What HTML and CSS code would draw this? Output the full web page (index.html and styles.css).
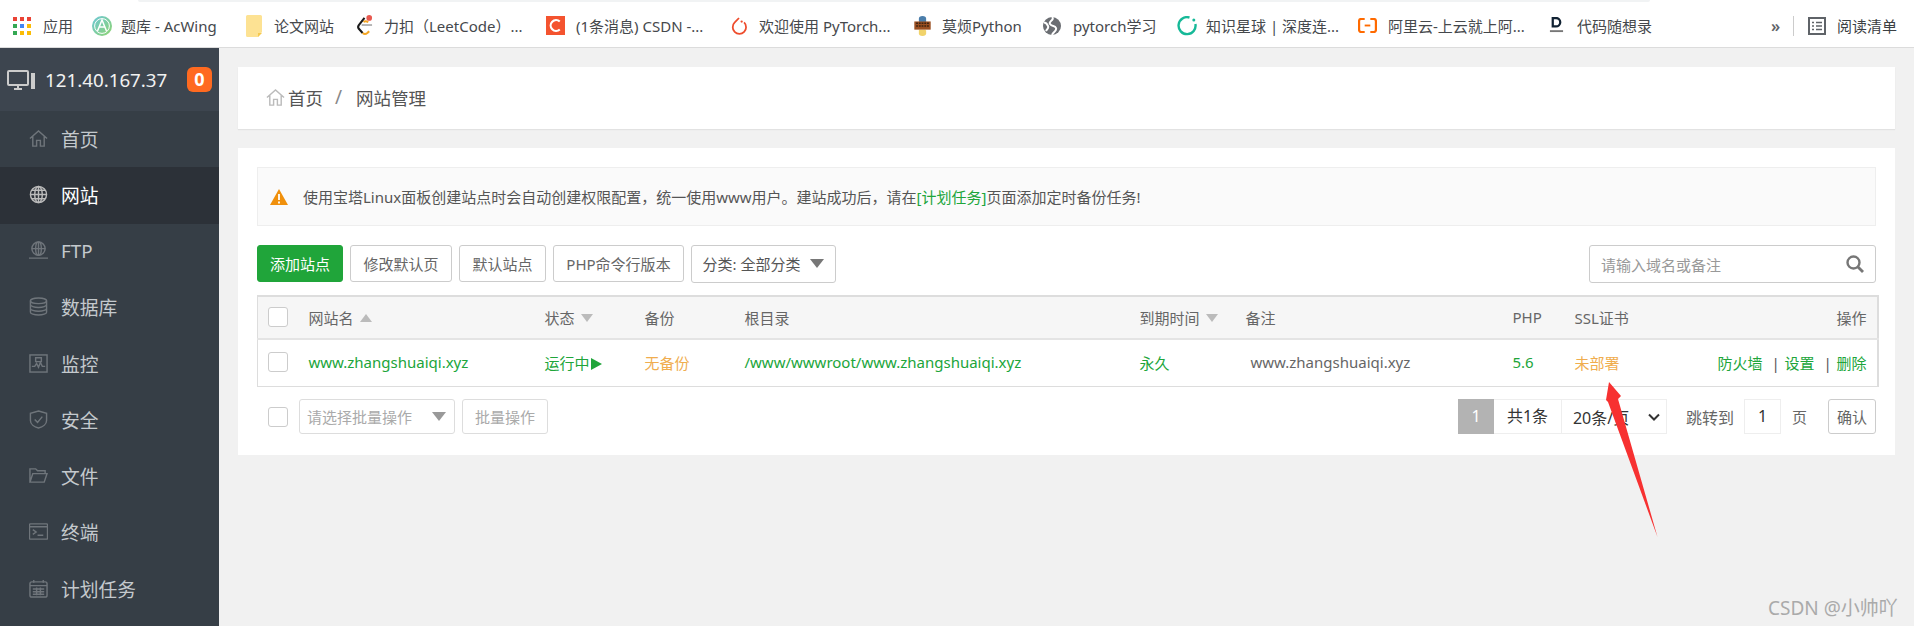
FILE: index.html
```html
<!DOCTYPE html>
<html lang="zh-CN">
<head>
<meta charset="utf-8">
<title>网站管理</title>
<link rel="stylesheet" href="styles.css">
</head>
<body>
<header class="bookmarks">
  <div class="tabstrip"></div>
  <div class="bm-row">
    <a class="bm bm-apps"><svg class="fav" viewBox="0 0 18 18"><g><rect x="0" y="0" width="4" height="4" fill="#ea4335"/><rect x="7" y="0" width="4" height="4" fill="#ea4335"/><rect x="14" y="0" width="4" height="4" fill="#ea4335"/><rect x="0" y="7" width="4" height="4" fill="#34a853"/><rect x="7" y="7" width="4" height="4" fill="#4285f4"/><rect x="14" y="7" width="4" height="4" fill="#fbbc05"/><rect x="0" y="14" width="4" height="4" fill="#34a853"/><rect x="7" y="14" width="4" height="4" fill="#fbbc05"/><rect x="14" y="14" width="4" height="4" fill="#fbbc05"/></g></svg><span>应用</span></a>
    <a class="bm bm-acw"><svg class="fav" viewBox="0 0 20 20"><defs><linearGradient id="acw" x1="0" y1="0" x2="1" y2="1"><stop offset="0" stop-color="#6cc7d8"/><stop offset="1" stop-color="#8fd46f"/></linearGradient></defs><circle cx="10" cy="10" r="10" fill="url(#acw)"/><circle cx="10" cy="10" r="7.4" fill="none" stroke="#fff" stroke-width="1"/><path d="M5.5 15L10 4l4.500 11M7.500 11h5" fill="none" stroke="#fff" stroke-width="1.500"/></svg><span>题库 - AcWing</span></a>
    <a class="bm bm-doc"><svg class="fav fav-doc" viewBox="0 0 16 22"><path d="M1.500 0h13A1.500 1.500 0 0 1 16 1.500V17l-4 5H1.500A1.500 1.500 0 0 1 0 20.500v-19A1.500 1.500 0 0 1 1.500 0z" fill="#fde293"/><path d="M12 22v-4h4z" fill="#f5c94f"/></svg><span>论文网站</span></a>
    <a class="bm bm-lc"><svg class="fav" viewBox="0 0 18 22"><path d="M9 3L3 10.500Q1.500 12.500 3 14.500L7 19" fill="none" stroke="#1a1a1a" stroke-width="2.200"/><path d="M6 10.500h11" stroke="#b3b3b3" stroke-width="2"/><path d="M7 19Q9.500 21 12 19l2-2" fill="none" stroke="#f5a623" stroke-width="2.200"/><path d="M8 7.500Q10 5.500 13 7.500" fill="none" stroke="#f5a623" stroke-width="2"/><circle cx="14" cy="3" r="3" fill="#e8594f"/></svg><span>力扣（LeetCode）...</span></a>
    <a class="bm bm-csdn"><svg class="fav" viewBox="0 0 20 20"><rect width="20" height="20" fill="#f4532f"/><path d="M14.500 5.800A5.700 5.700 0 1 0 14.500 14.200" fill="none" stroke="#fff" stroke-width="2.300"/></svg><span>(1条消息) CSDN -...</span></a>
    <a class="bm bm-pt"><svg class="fav" viewBox="0 0 18 22"><path d="M9 2L4.200 7a7.500 7.500 0 1 0 10.500 0" fill="none" stroke="#ee4c2c" stroke-width="2"/><circle cx="12" cy="6" r="1.300" fill="#ee4c2c"/></svg><span>欢迎使用 PyTorch...</span></a>
    <a class="bm bm-mf"><svg class="fav" viewBox="0 0 20 22"><path d="M6 6V3q0-3 4-3t4 3v4H7" fill="#4b7eab"/><path d="M14 16v3q0 3-4 3t-4-3v-4h7" fill="#f1d36b"/><rect x="1" y="6" width="18" height="9" fill="#9a4f22"/><path d="M3 8h14M3 11h14" stroke="#3d2413" stroke-width="1.500" stroke-dasharray="2 1"/></svg><span>莫烦Python</span></a>
    <a class="bm bm-py"><svg class="fav" viewBox="0 0 18 18"><circle cx="9" cy="9" r="9" fill="#6b6e73"/><path d="M9 0c3 3-4 4-2 7s5 1 6 4-3 4-4 7M1 6c2-1 3 1 4 3s-1 3-2 5" fill="none" stroke="#fff" stroke-width="2"/></svg><span>pytorch学习</span></a>
    <a class="bm bm-zs"><svg class="fav" viewBox="0 0 20 20"><path d="M12.500 1.500A8.500 8.500 0 1 0 18.400 8" fill="none" stroke="#16b998" stroke-width="2.400"/><circle cx="16.800" cy="4" r="1.500" fill="#16b998"/></svg><span>知识星球 | 深度连...</span></a>
    <a class="bm bm-ali"><svg class="fav" viewBox="0 0 20 16"><path d="M7 1H3.500Q1 1 1 3.500v9Q1 15 3.500 15H7M13 1h3.500Q19 1 19 3.500v9q0 2.500-2.500 2.500H13" fill="none" stroke="#ff6a00" stroke-width="2.400"/><path d="M7 8h6" stroke="#ff6a00" stroke-width="2"/></svg><span>阿里云-上云就上阿...</span></a>
    <a class="bm bm-dm"><svg class="fav fav-d" viewBox="0 0 16 18"><path d="M4 1h3.500a4.500 4.500 0 0 1 0 9H4z" fill="none" stroke="#123" stroke-width="2.400"/><rect x="1" y="14" width="14" height="2" fill="#777"/></svg><span>代码随想录</span></a>
    <div class="bm-end">
      <span class="more">»</span>
      <i class="sep"></i>
      <svg class="read-ico" viewBox="0 0 18 18"><rect x="1" y="1" width="16" height="16" fill="none" stroke="#5f6368" stroke-width="2"/><path d="M4 5.500h2M8 5.500h6M4 9h2M8 9h6M4 12.500h2M8 12.500h6" stroke="#5f6368" stroke-width="1.500"/></svg>
      <span class="read-txt">阅读清单</span>
    </div>
  </div>
</header>

<div class="app">
  <aside class="sidebar">
    <div class="side-head">
      <svg class="monitor" viewBox="0 0 28 20"><rect x="1" y="1" width="20" height="14" rx="1" fill="none" stroke="#ccc" stroke-width="2"/><path d="M7 19h8M11 15v4" stroke="#ccc" stroke-width="2"/><rect x="24" y="3" width="4" height="16" fill="#ccc"/></svg>
      <span class="ip">121.40.167.37</span>
      <span class="badge">0</span>
    </div>
    <nav class="nav">
      <a class="nav-item"><svg class="nav-ico" viewBox="0 0 20 20"><path d="M1 10l9-8 9 8M4 8v10h4v-6h4v6h4V8" /></svg><span>首页</span></a>
      <a class="nav-item active"><svg class="nav-ico" viewBox="0 0 20 20"><circle cx="10" cy="10" r="8.500"/><ellipse cx="10" cy="10" rx="4" ry="8.500"/><path d="M1.500 10h17M3 5.500h14M3 14.500h14M10 1.500v17"/></svg><span>网站</span></a>
      <a class="nav-item"><svg class="nav-ico" viewBox="0 0 20 20"><circle cx="10" cy="8" r="7"/><ellipse cx="10" cy="8" rx="3" ry="7"/><path d="M3 8h14M10 1v14M0 18h20"/></svg><span>FTP</span></a>
      <a class="nav-item"><svg class="nav-ico" viewBox="0 0 20 20"><ellipse cx="10" cy="4" rx="8.500" ry="3"/><path d="M1.500 4v12c0 1.600 3.800 3 8.500 3s8.500-1.400 8.500-3V4M1.500 8c0 1.600 3.800 3 8.500 3s8.500-1.400 8.500-3M1.500 12c0 1.600 3.800 3 8.500 3s8.500-1.400 8.500-3"/></svg><span>数据库</span></a>
      <a class="nav-item"><svg class="nav-ico" viewBox="0 0 20 20"><rect x="1" y="1" width="18" height="18"/><path d="M3 13h3l2-3 2 4 2-5 2 4h3M7 4h6v4H7z"/></svg><span>监控</span></a>
      <a class="nav-item"><svg class="nav-ico" viewBox="0 0 20 20"><path d="M10 1l8.500 2.500V11c0 4-4 7-8.500 8-4.500-1-8.500-4-8.500-8V3.500z"/><path d="M6 10l3 3 5-6"/></svg><span>安全</span></a>
      <a class="nav-item"><svg class="nav-ico" viewBox="0 0 20 20"><path d="M1 17V3h6l2 2h8v3M1 17h15l3-9H4z"/></svg><span>文件</span></a>
      <a class="nav-item"><svg class="nav-ico" viewBox="0 0 20 20"><rect x="0.500" y="2" width="19" height="16" rx="1"/><path d="M1 5h18M4 8l3.500 2.500L4 13M9 14h6"/></svg><span>终端</span></a>
      <a class="nav-item"><svg class="nav-ico" viewBox="0 0 20 20"><rect x="1" y="3" width="18" height="16" rx="2"/><path d="M1 7h18M5 1v3M15 1v3M4 10.500h12M4 13.500h12M4 16h12M8 9v8M12 9v8"/></svg><span>计划任务</span></a>
    </nav>
  </aside>

  <main class="main">
    <section class="crumbs">
      <svg class="crumb-home" viewBox="0 0 20 20"><path d="M1 10l9-8 9 8M4 8v10h4v-6h4v6h4V8"/></svg>
      <span class="crumb-link">首页</span>
      <span class="crumb-sep">/</span>
      <span class="crumb-cur">网站管理</span>
    </section>

    <section class="panel">
      <div class="notice">
        <svg class="warn" viewBox="0 0 18 16"><path d="M9 0l9 16H0z" fill="#f0900c"/><path d="M9 5v6M9 12.500v2" stroke="#fff" stroke-width="1.800"/></svg>
        <span>使用宝塔Linux面板创建站点时会自动创建权限配置，统一使用www用户。建站成功后，请在<em class="green">[计划任务]</em>页面添加定时备份任务!</span>
      </div>

      <div class="toolbar">
        <a class="btn btn-primary">添加站点</a>
        <a class="btn btn-a">修改默认页</a>
        <a class="btn btn-b">默认站点</a>
        <a class="btn btn-c">PHP命令行版本</a>
        <a class="btn btn-cat">分类: 全部分类<i class="caret caret-dark"></i></a>
        <div class="search">
          <span class="search-ph">请输入域名或备注</span>
          <svg class="search-ico" viewBox="0 0 18 18"><circle cx="7.500" cy="7.500" r="6" fill="none" stroke="#777" stroke-width="2.400"/><path d="M12 12l5 5" stroke="#777" stroke-width="2.800"/></svg>
        </div>
      </div>

      <table class="sites">
        <colgroup><col class="c0"><col class="c1"><col class="c2"><col class="c3"><col class="c4"><col class="c5"><col class="c6"><col class="c7"><col class="c8"></colgroup>
        <thead>
          <tr>
            <th class="cb"><i class="check"></i></th>
            <th>网站名<i class="sort up"></i></th>
            <th>状态<i class="sort"></i></th>
            <th>备份</th>
            <th>根目录</th>
            <th>到期时间<i class="sort"></i></th>
            <th>备注</th>
            <th>PHP</th>
            <th class="split"><span>SSL证书</span><span>操作</span></th>
          </tr>
        </thead>
        <tbody>
          <tr>
            <td class="cb"><i class="check"></i></td>
            <td class="green">www.zhangshuaiqi.xyz</td>
            <td class="green">运行中<i class="play"></i></td>
            <td class="orange">无备份</td>
            <td class="green">/www/wwwroot/www.zhangshuaiqi.xyz</td>
            <td class="green">永久</td>
            <td class="remark">www.zhangshuaiqi.xyz</td>
            <td class="green">5.6</td>
            <td class="split"><span class="orange">未部署</span><span class="ops"><span class="green">防火墙</span><b>|</b><span class="green">设置</span><b>|</b><span class="green">删除</span></span></td>
          </tr>
        </tbody>
      </table>

      <div class="footer">
        <i class="check"></i>
        <div class="batch-sel">请选择批量操作<i class="caret"></i></div>
        <a class="batch-btn">批量操作</a>
        <div class="pager">
          <span class="pg-cur">1</span>
          <span class="pg-total">共1条</span>
          <span class="pg-size">20条/页<svg class="chev" viewBox="0 0 12 8"><path d="M1 1.500l5 5 5-5" fill="none" stroke="#333" stroke-width="2"/></svg></span>
          <span class="pg-label">跳转到</span>
          <span class="pg-input">1</span>
          <span class="pg-unit">页</span>
          <a class="pg-ok">确认</a>
        </div>
      </div>
    </section>
  </main>
</div>

<svg class="arrow" viewBox="0 0 60 160"><polygon points="11,1 23,15 20,18 59.500,156 10,21 8,19" fill="#f73131"/></svg>
<div class="watermark">CSDN @小帅吖</div>
</body>
</html>
```

FILE: styles.css
```css
* { box-sizing: border-box; }
html, body { margin: 0; height: 626px; overflow: hidden; }
body {
  position: relative;
  background: #f1f1f1;
  font-family: "Noto Sans", "Noto Sans CJK SC", sans-serif;
  font-size: 15px;
  color: #666;
}
em { font-style: normal; }
i { display: inline-block; font-style: normal; }

/* browser bookmarks bar */
.bookmarks { height: 48px; background: #fff; border-bottom: 1px solid #dcdcdc; }
.tabstrip { height: 2px; margin: 0 264px 0 138px; background: #f1f3f4; border-radius: 0 0 6px 6px; }
.bm-row { display: flex; align-items: center; height: 45px; padding: 2px 0 0 13px; color: #45484c; font-size: 15px; white-space: nowrap; }
.bm { display: flex; align-items: center; flex: none; }
.fav { width: 18px; height: 18px; margin-right: 12px; flex: none; }
.bm-apps { width: 79px; }
.bm-acw { width: 154px; }
.bm-acw .fav { width: 20px; height: 20px; margin-right: 9px; }
.bm-doc { width: 110px; }
.bm-doc .fav { width: 16px; height: 22px; }
.bm-lc { width: 190px; }
.bm-lc .fav { width: 17px; height: 21px; margin-right: 11px; }
.bm-csdn { width: 185px; }
.bm-csdn .fav { width: 19px; height: 19px; margin-right: 11px; }
.bm-pt { width: 182px; }
.bm-pt .fav { width: 16px; height: 20px; margin-right: 12px; }
.bm-mf { width: 130px; }
.bm-mf .fav { width: 19px; height: 20px; margin-right: 10px; }
.bm-py { width: 134px; }
.bm-zs { width: 181px; }
.bm-zs .fav { width: 20px; height: 20px; margin-right: 9px; }
.bm-ali { width: 191px; }
.bm-ali .fav { width: 19px; height: 15px; margin-right: 11px; }
.bm-dm { width: 110px; }
.bm-dm .fav { width: 15px; height: 17px; margin-right: 13px; }
.bm-end { display: flex; align-items: center; margin-left: 112px; }
.more { width: 22px; font-size: 16px; font-weight: 600; color: #5f6368; }
.sep { width: 1px; height: 20px; background: #ccc; margin-right: 14px; }
.read-ico { width: 18px; height: 18px; margin-right: 11px; }
.read-txt { color: #3c4043; }

/* app shell */
.app { display: flex; height: 578px; }
.sidebar { width: 219px; flex: none; background: #363e46; }
.side-head { display: flex; align-items: center; height: 63px; padding: 0 7px; background: #3d454f; }
.monitor { width: 28px; height: 20px; margin-right: 10px; flex: none; }
.ip { font-size: 18.75px; color: #f1f1f1; flex: 1; }
.badge { width: 25px; height: 25px; border-radius: 6px; background: #ff6a20; color: #fff; font-weight: 700; font-size: 18px; line-height: 25px; text-align: center; }
.nav-item { display: flex; align-items: center; height: 56.25px; padding: 0 0 2px 29px; color: #c4c9cd; font-size: 18.75px; }
.nav-ico { width: 19px; height: 19px; margin-right: 13px; fill: none; stroke: #6f757b; stroke-width: 1.500; flex: none; }
.nav-item.active { background: #2c3138; color: #fff; }
.nav-item.active .nav-ico { stroke: #bbb; }

.main { flex: 1; min-width: 0; padding: 19px; }
.crumbs { display: flex; align-items: center; height: 62px; padding: 0 0 2px 28px; background: #fff; box-shadow: 0 1px 1px #e2e2e2; font-size: 17.5px; color: #555; }
.crumb-home { width: 19px; height: 19px; margin-right: 3px; fill: none; stroke: #bbb; stroke-width: 1.500; }
.crumb-sep { margin: 0 14px 0 12px; color: #888; font-size: 19px; }
.panel { margin-top: 19px; height: 307px; padding: 19px; background: #fff; }

.notice { display: flex; align-items: center; height: 59px; padding-left: 12px; background: #fafafa; border: 1px solid #eee; color: #555; }
.warn { width: 18px; height: 16px; margin-right: 15px; flex: none; }
.green { color: #20a53a; }
.orange { color: #f0ad4e; }

.toolbar { display: flex; align-items: flex-start; gap: 7px; margin-top: 19px; height: 38px; }
.btn { display: flex; align-items: center; justify-content: center; height: 37px; padding-bottom: 1px; border: 1px solid #ccc; border-radius: 3px; color: #666; background: #fff; }
.btn-primary { width: 86px; background: #20a53a; border-color: #20a53a; color: #fff; }
.btn-a { width: 102px; }
.btn-b { width: 87px; }
.btn-c { width: 131px; }
.btn-cat { width: 145px; height: 38px; color: #555; }
.caret { width: 0; height: 0; margin-left: 10px; border: 7px solid transparent; border-top: 9px solid #999; border-bottom: 0; }
.caret-dark { border-top-color: #777; }
.search { display: flex; align-items: center; justify-content: space-between; width: 287px; height: 38px; margin-left: auto; padding: 0 11px; border: 1px solid #ccc; border-radius: 3px; }
.search-ph { color: #999; }
.search-ico { width: 18px; height: 18px; }

.sites { width: 1620px; margin-top: 12px; border-collapse: collapse; table-layout: fixed; border: 1px solid #ddd; border-right-width: 2px; border-top-width: 2px; }
.c0 { width: 51px; } .c1 { width: 236px; } .c2 { width: 100px; } .c3 { width: 100px; }
.c4 { width: 395px; } .c5 { width: 106px; } .c6 { width: 267px; } .c7 { width: 62px; } .c8 { width: 303px; }
.sites th, .sites td { text-align: left; font-weight: 400; white-space: nowrap; }
.sites th { padding: 0 0 1px; }
.sites td { padding: 0 0 2px; }
.sites thead tr { height: 41px; background: #f6f6f6; border-bottom: 2px solid #e4e4e4; }
.sites tbody tr { height: 46px; }
.sites .cb { padding-left: 10px; }
.check { display: block; width: 20px; height: 20px; background: #fff; border: 1px solid #ccc; border-radius: 3px; }
.sort { width: 0; height: 0; margin-left: 6px; vertical-align: 2px; border: 6.500px solid transparent; border-top: 8px solid #bbb; border-bottom: 0; }
.sort.up { border-top: 0; border-bottom: 8px solid #bbb; }
.play { width: 0; height: 0; margin-left: 1px; vertical-align: -1px; border: 6.500px solid transparent; border-left: 11px solid #20a53a; border-right: 0; }
.sites .remark { padding-left: 5px; }
.sites .split { display: flex; align-items: center; justify-content: space-between; padding-right: 10px; height: 41px; }
.sites tbody .split { height: 46px; }
.ops b { display: inline-block; width: 4px; margin: 0 9px; font-weight: 400; color: #555; text-align: center; }

.footer { display: flex; align-items: center; height: 35px; margin-top: 12px; padding-left: 11px; }
.batch-sel { display: flex; align-items: center; justify-content: space-between; width: 156px; height: 35px; margin-left: 11px; padding: 0 8px 0 7px; border: 1px solid #ddd; border-radius: 3px; color: #aaa; }
.batch-btn { display: flex; align-items: center; justify-content: center; width: 86px; height: 35px; margin-left: 7px; border: 1px solid #ddd; border-radius: 3px; color: #aaa; }
.pager { display: flex; align-items: center; margin-left: auto; height: 35px; color: #333; font-size: 16px; }
.pg-cur { width: 36px; height: 35px; line-height: 35px; text-align: center; background: #b3b3b3; color: #fff; }
.pg-total { width: 68px; height: 35px; line-height: 33px; text-align: center; border: 1px solid #eee; border-left: 0; }
.pg-size { display: flex; align-items: center; justify-content: space-between; width: 105px; height: 35px; padding: 0 6px 0 11px; border: 1px solid #eee; border-left: 0; }
.chev { width: 12px; height: 8px; }
.pg-label { margin-left: 19px; color: #666; }
.pg-input { width: 37px; height: 35px; margin-left: 10px; line-height: 33px; text-align: center; border: 1px solid #eee; }
.pg-unit { margin-left: 11px; color: #666; font-size: 15px; }
.pg-ok { width: 48px; height: 35px; margin-left: 21px; line-height: 35px; text-align: center; border: 1px solid #ccc; border-radius: 3px; color: #666; font-size: 15px; }

/* pasted-on annotation and watermark */
.arrow { position: absolute; left: 1598px; top: 381px; width: 60px; height: 160px; }
.watermark { position: absolute; left: 1768px; top: 595px; font-size: 19px; line-height: 26px; color: #aaa; white-space: nowrap; }
```
